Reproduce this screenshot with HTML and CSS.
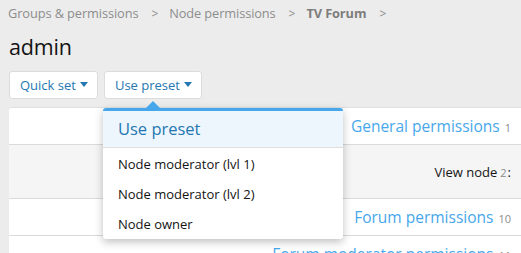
FILE: index.html
```html
<!DOCTYPE html>
<html>
<head>
<meta charset="utf-8">
<link rel="stylesheet" href="styles.css">
</head>
<body>
<div class="page">
  <nav class="crumbs">
    <span>Groups &amp; permissions</span><span class="sep">&gt;</span>
    <span>Node permissions</span><span class="sep">&gt;</span>
    <span class="strong">TV Forum</span><span class="sep">&gt;</span>
  </nav>
  <h1 class="title">admin</h1>
  <div class="buttons">
    <button class="btn">Quick set <span class="caret"></span></button>
    <div class="menu-wrap">
      <button class="btn">Use preset <span class="caret"></span></button>
      <div class="menu">
        <div class="menu-arrow"></div>
        <div class="menu-header">Use preset</div>
        <div class="menu-items">
          <div class="menu-item">Node moderator (lvl 1)</div>
          <div class="menu-item">Node moderator (lvl 2)</div>
          <div class="menu-item">Node owner</div>
        </div>
      </div>
    </div>
  </div>
  <div class="block">
    <div class="row head">General permissions <span class="count">1</span></div>
    <div class="row alt">View node <span class="hint">2</span>:</div>
    <div class="row head">Forum permissions <span class="count">10</span></div>
    <div class="row head">Forum moderator permissions <span class="count">11</span></div>
  </div>
</div>
</body>
</html>
```

FILE: styles.css
```css
html, body {
  margin: 0;
  padding: 0;
  background: #ececec;
  overflow: hidden;
}
body {
  font-family: "Open Sans", "Noto Sans", sans-serif;
  color: #141414;
  width: 521px;
  height: 253px;
}
.page {
  padding-left: 9px;
}
.crumbs {
  display: flex;
  align-items: center;
  height: 24px;
  padding-top: 1px;
  margin-left: -1px;
  font-size: 12.8px;
  color: #8c8c8c;
  letter-spacing: -0.1px;
}
.crumbs .sep {
  margin: 0 11px 0 13px;
  font-size: 12px;
}
.crumbs .strong {
  font-weight: 700;
  color: #7d7d7d;
}
.title {
  margin: 0;
  height: 46px;
  font-size: 21.5px;
  font-weight: 400;
  line-height: 44px;
  letter-spacing: -0.2px;
}
.buttons {
  display: flex;
  gap: 6px;
  height: 36px;
}
.btn {
  height: 28px;
  padding: 0 9px 0 10px;
  background: #fff;
  border: 1px solid #dcdcdc;
  border-radius: 3px;
  font-family: inherit;
  font-size: 13px;
  color: #2577b1;
  display: flex;
  align-items: center;
  gap: 4px;
}
.caret {
  width: 0;
  height: 0;
  border-left: 4px solid transparent;
  border-right: 4px solid transparent;
  border-top: 5px solid #2577b1;
  margin-top: -1px;
}
.menu-wrap {
  position: relative;
}
.menu {
  position: absolute;
  left: -1px;
  top: 37px;
  width: 240px;
  background: #fff;
  border-top: 3px solid #47a7eb;
  border-radius: 3px;
  box-shadow: 0 3px 8px rgba(0, 0, 0, 0.25);
  z-index: 5;
}
.menu-arrow {
  position: absolute;
  left: 43px;
  top: -10px;
  width: 0;
  height: 0;
  border-left: 7px solid transparent;
  border-right: 7px solid transparent;
  border-bottom: 7px solid #47a7eb;
}
.menu-header {
  height: 36px;
  padding-left: 15px;
  background: #edf6fd;
  border-bottom: 1px solid #dfdfdf;
  color: #2577b1;
  font-size: 16.5px;
  line-height: 36px;
}
.menu-items {
  padding: 1px 0 0;
}
.menu-item {
  height: 30px;
  line-height: 30px;
  padding-left: 15px;
  font-size: 13px;
  color: #141414;
}
.block {
  background: #fff;
  border-radius: 3px 0 0 0;
  border-top: 1px solid #e0e0e0;
  margin-top: 0;
}
.row {
  display: flex;
  justify-content: flex-end;
  align-items: center;
  padding-right: 10px;
  border-bottom: 1px solid #dadada;
}
.row.head {
  height: 36px;
  font-size: 15.5px;
  color: #47a7eb;
}
.row.alt {
  height: 53px;
  background: #f5f5f5;
  font-size: 13px;
  color: #141414;
}
.count {
  font-size: 11px;
  color: #8c8c8c;
  margin-left: 5px;
  margin-top: 3px;
}
.hint {
  font-size: 11px;
  color: #8c8c8c;
  margin-left: 3px;
  margin-right: 1px;
  margin-top: 2px;
}
```
